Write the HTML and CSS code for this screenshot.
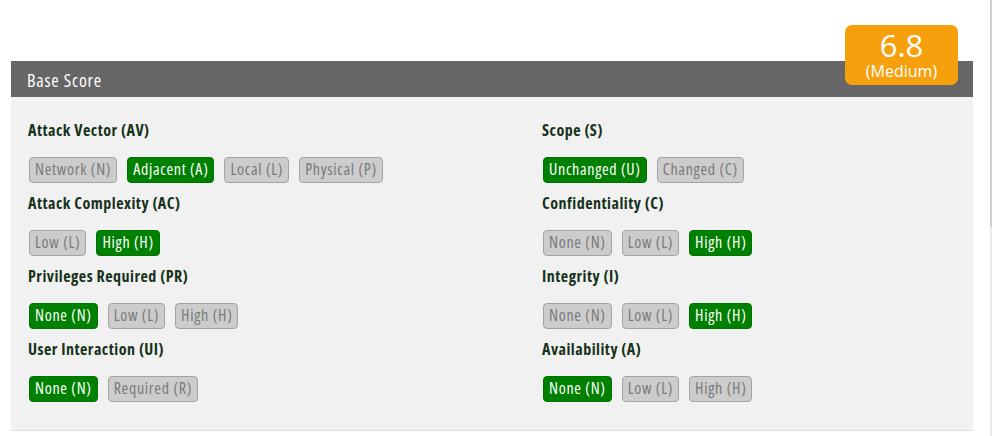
FILE: index.html
```html
<!DOCTYPE html>
<html>
<head>
<meta charset="utf-8">
<link rel="stylesheet" href="styles.css">
</head>
<body>
<div class="page">
  <main class="main">
    <section class="panel">
      <header class="panel-head">
        <span class="panel-title">Base Score</span>
        <div class="score-badge">
          <span class="score-num">6.8</span>
          <span class="score-sev">(Medium)</span>
        </div>
      </header>
      <div class="panel-body">
        <div class="col">
          <div class="metric">
            <div class="metric-label">Attack Vector (AV)</div>
            <div class="btns">
              <span class="btn">Network (N)</span>
              <span class="btn on">Adjacent (A)</span>
              <span class="btn">Local (L)</span>
              <span class="btn">Physical (P)</span>
            </div>
          </div>
          <div class="metric">
            <div class="metric-label">Attack Complexity (AC)</div>
            <div class="btns">
              <span class="btn">Low (L)</span>
              <span class="btn on">High (H)</span>
            </div>
          </div>
          <div class="metric">
            <div class="metric-label">Privileges Required (PR)</div>
            <div class="btns">
              <span class="btn on">None (N)</span>
              <span class="btn">Low (L)</span>
              <span class="btn">High (H)</span>
            </div>
          </div>
          <div class="metric">
            <div class="metric-label">User Interaction (UI)</div>
            <div class="btns">
              <span class="btn on">None (N)</span>
              <span class="btn">Required (R)</span>
            </div>
          </div>
        </div>
        <div class="col">
          <div class="metric">
            <div class="metric-label">Scope (S)</div>
            <div class="btns">
              <span class="btn on">Unchanged (U)</span>
              <span class="btn">Changed (C)</span>
            </div>
          </div>
          <div class="metric">
            <div class="metric-label">Confidentiality (C)</div>
            <div class="btns">
              <span class="btn">None (N)</span>
              <span class="btn">Low (L)</span>
              <span class="btn on">High (H)</span>
            </div>
          </div>
          <div class="metric">
            <div class="metric-label">Integrity (I)</div>
            <div class="btns">
              <span class="btn">None (N)</span>
              <span class="btn">Low (L)</span>
              <span class="btn on">High (H)</span>
            </div>
          </div>
          <div class="metric">
            <div class="metric-label">Availability (A)</div>
            <div class="btns">
              <span class="btn on">None (N)</span>
              <span class="btn">Low (L)</span>
              <span class="btn">High (H)</span>
            </div>
          </div>
        </div>
      </div>
    </section>
  </main>
  <div class="track"><div class="thumb"></div></div>
</div>
</body>
</html>
```
FILE: styles.css
```css
html, body {
  margin: 0;
  padding: 0;
  background: #ffffff;
}
body {
  font-family: "Open Sans", "DejaVu Sans", sans-serif;
  font-stretch: 87.5%;
}
.page {
  display: flex;
  width: 994px;
  height: 436px;
  overflow: hidden;
}
.main {
  flex: 1;
  padding-top: 61px;
}
.panel {
  margin-left: 11px;
  width: 962px;
  border-bottom: 1px solid #dcdcdc;
}
.panel-head {
  position: relative;
  height: 36px;
  background: #666666;
  display: flex;
  align-items: center;
  padding-left: 16px;
}
.panel-title {
  color: #ffffff;
  font-size: 18px;
  letter-spacing: 0.8px;
  line-height: 20px;
  padding-top: 1px;
}
.score-badge {
  position: absolute;
  right: 15px;
  top: -36px;
  width: 113px;
  height: 60px;
  box-sizing: border-box;
  padding-top: 4px;
  background: #f7a00d;
  border-radius: 7px;
  color: #ffffff;
  display: flex;
  flex-direction: column;
  align-items: center;
  font-stretch: 100%;
}
.score-num {
  font-size: 31px;
  line-height: 32px;
}
.score-sev {
  font-size: 16px;
  line-height: 20px;
}
.panel-body {
  background: #f1f1f1;
  display: grid;
  grid-template-columns: 514px 1fr;
  padding: 23px 0 18px 17px;
}
.metric {
  margin-bottom: 10px;
}
.metric-label {
  color: #17321a;
  font-weight: 700;
  font-size: 16px;
  letter-spacing: 0.5px;
  line-height: 20px;
  margin-bottom: 17px;
}
.btns {
  display: flex;
  gap: 10px;
  padding-left: 1px;
}
.btn {
  box-sizing: border-box;
  height: 26px;
  padding: 0 5px 2px;
  border: 1px solid #a3a3a3;
  border-radius: 4px;
  background: #cccccc;
  color: #7a7a7a;
  font-size: 16px;
  letter-spacing: 0.7px;
  line-height: 22px;
  white-space: nowrap;
}
.btn.on {
  background: #008000;
  border-color: #007400;
  color: #ffffff;
}
.track {
  width: 2px;
  margin-right: 2px;
  background: #ececec;
}
.thumb {
  height: 227px;
  background: #cfcfcf;
}
```
